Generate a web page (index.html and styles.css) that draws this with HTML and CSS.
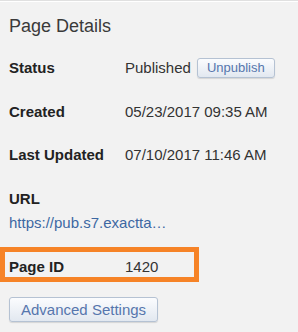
FILE: index.html
```html
<!DOCTYPE html>
<html>
<head>
  <title>Page Details</title>
  <link rel="stylesheet" href="styles.css">
</head>
<body>
  <div class="panel">
    <h2 class="panel-title">Page Details</h2>

    <div class="row">
      <div class="label">Status</div>
      <div class="value">
        Published
        <button class="btn btn-small">Unpublish</button>
      </div>
    </div>

    <div class="row">
      <div class="label">Created</div>
      <div class="value">05/23/2017 09:35 AM</div>
    </div>

    <div class="row">
      <div class="label">Last Updated</div>
      <div class="value">07/10/2017 11:46 AM</div>
    </div>

    <div class="url-block">
      <div class="label">URL</div>
      <a class="url-link" href="#">https://pub.s7.exactta…</a>
    </div>

    <div class="row highlight">
      <div class="label">Page ID</div>
      <div class="value">1420</div>
    </div>

    <button class="btn btn-large">Advanced Settings</button>
  </div>
</body>
</html>
```

FILE: styles.css
```css
:root {
  --text: #333333;
  --label: #222222;
  --link: #3d68a3;
  --button-text: #5676ad;
  --button-border: #b5c2d3;
  --background: #f2f2f2;
  --highlight: #f68327;
}

* {
  margin: 0;
  padding: 0;
  box-sizing: border-box;
}

body {
  width: 298px;
  height: 332px;
  font-family: 'Liberation Sans', Arial, sans-serif;
  font-size: 15px;
  color: var(--text);
  background: var(--background);
  border-top: 1px solid #e0e0e0;
  box-shadow: inset 0 1px 0 #ffffff;
  overflow: hidden;
}

.panel {
  padding: 14px 0 0 9px;
}

.panel-title {
  font-size: 18px;
  font-weight: normal;
  line-height: 22px;
  color: #3a3a3a;
  margin-bottom: 19px;
}

.row {
  display: flex;
  align-items: center;
  height: 24px;
  margin-bottom: 19.5px;
  line-height: 20px;
}

.label {
  width: 116px;
  flex-shrink: 0;
  font-weight: bold;
  color: var(--label);
}

.value {
  display: flex;
  align-items: center;
}

.url-block {
  line-height: 24px;
}

.url-link {
  color: var(--link);
  text-decoration: none;
}

.highlight {
  width: 199px;
  height: 35px;
  margin: 12.5px 0 15px -9px;
  padding: 5px 0 0 4px;
  border: 5px solid var(--highlight);
  align-items: flex-start;
}

.btn {
  font-family: 'Liberation Sans', Arial, sans-serif;
  color: var(--button-text);
  background: linear-gradient(to bottom, #fbfcfe, #e2e8f0);
  border: 1px solid var(--button-border);
  border-radius: 3px;
  box-shadow: 0 1px 1px rgba(0, 0, 0, 0.12);
}

.btn-small {
  height: 20px;
  font-size: 13px;
  padding: 0 9px;
  margin-left: 6px;
  line-height: 18px;
}

.btn-large {
  height: 25px;
  font-size: 15px;
  line-height: 20px;
  padding: 1px 11px 0;
}
```
